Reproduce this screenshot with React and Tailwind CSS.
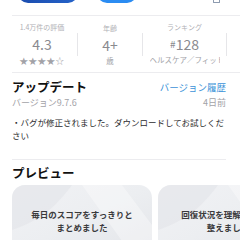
import { Star } from "lucide-react";

const font = { fontFamily: '"Noto Sans CJK JP", "Noto Sans", sans-serif' };

function Stat({ label, value, sub, width }) {
  return (
    <div className={`flex flex-col items-center ${width}`}>
      <div className="text-[7px] leading-[10px] text-[#b0b0b5]">{label}</div>
      <div className="mt-[4px] text-[14px] leading-[16px] text-[#8a8a8f]">{value}</div>
      <div className="mt-[3px] w-full overflow-hidden whitespace-nowrap text-center text-[7.5px] leading-[10px] text-[#a2a2a7]">
        {sub}
      </div>
    </div>
  );
}

function PreviewCard({ lines, className }) {
  return (
    <div
      className={`relative h-[70px] shrink-0 overflow-hidden rounded-t-[13px] bg-gradient-to-br from-[#f1f2f5] via-[#eceef1] to-[#e3e5e9] ${className}`}
    >
      {/* soft diagonal shading like the screenshot art */}
      <svg className="absolute inset-0 h-full w-full" viewBox="0 0 140 70" preserveAspectRatio="none">
        <path d="M0 0 H60 C45 20 30 35 0 45 Z" fill="#e4e6ea" opacity="0.7" />
        <path d="M70 0 H110 L140 40 V70 H120 Z" fill="#ffffff" opacity="0.35" />
      </svg>
      <div className="relative pt-[23px] text-center text-[8.5px] font-semibold leading-[13px] text-[#3a3a3c]">
        {lines.map((l) => (
          <div key={l} className="whitespace-nowrap">{l}</div>
        ))}
      </div>
    </div>
  );
}

export default function App() {
  return (
    <div className="h-[240px] w-[240px] overflow-hidden bg-white" style={font}>
      {/* bottoms of the buttons above */}
      <div className="flex h-[3px] items-end overflow-hidden">
        <div className="ml-[18px] h-[20px] w-[60px] shrink-0 rounded-full bg-gradient-to-r from-[#1b4cae] to-[#2563c9]" />
        <div className="ml-[19px] h-[20px] w-[40px] shrink-0 rounded-full bg-[#2b8cf2]" />
        <div className="ml-[76px] h-[10px] w-[7px] shrink-0 rounded-[1px] border border-[#8d9bb0] border-t-0" />
      </div>

      <div className="ml-[12px] mt-[12px] h-px bg-[#ececef]" />

      {/* ratings row */}
      <div className="flex h-[56px] items-center pl-[7px]">
        <Stat
          label="1.4万件の評価"
          value="4.3"
          sub={<span className="text-[8.5px] tracking-[0.5px]">★★★★☆</span>}
          width="w-[70px]"
        />
        <div className="h-[23px] w-px shrink-0 bg-[#e6e6e9]" />
        <Stat label="年齢" value="4+" sub="歳" width="w-[64px]" />
        <div className="h-[23px] w-px shrink-0 bg-[#e6e6e9]" />
        <Stat
          label="ランキング"
          value={
            <span>
              <span className="text-[10px] align-[2px]">#</span>128
            </span>
          }
          sub={<span className="inline-block w-[70px] overflow-hidden">ヘルスケア／フィットネス</span>}
          width="w-[83px]"
        />
        <div className="h-[23px] w-px shrink-0 bg-[#e6e6e9]" />
      </div>

      <div className="ml-[12px] h-px bg-[#ececef]" />

      {/* update section */}
      <div className="pl-[12px] pr-[14px]">
        <div className="mt-[6px] flex items-center justify-between">
          <div className="text-[12.5px] font-bold leading-[16px] text-[#111]">アップデート</div>
          <div className="text-[9.5px] leading-[14px] text-[#3d93d8]">バージョン履歴</div>
        </div>
        <div className="mt-[2px] flex items-center justify-between text-[9px] leading-[12px] text-[#a3a3a8]">
          <span>バージョン9.7.6</span>
          <span>4日前</span>
        </div>
        <div className="mt-[7px] text-[8.5px] leading-[13px] text-[#2c2c2e]">
          ・バグが修正されました。ダウンロードしてお試しください
        </div>
        <div className="mt-[17px] h-px bg-[#ececef]" />
        <div className="mt-[5px] text-[12.5px] font-bold leading-[16px] text-[#111]">プレビュー</div>
      </div>

      <div className="mt-[4px] flex gap-[6px] pl-[12px]">
        <PreviewCard className="w-[140px]" lines={["毎日のスコアをすっきりと", "まとめました"]} />
        <PreviewCard className="w-[140px]" lines={["回復状況を理解しやすく", "整えました"]} />
      </div>
    </div>
  );
}
